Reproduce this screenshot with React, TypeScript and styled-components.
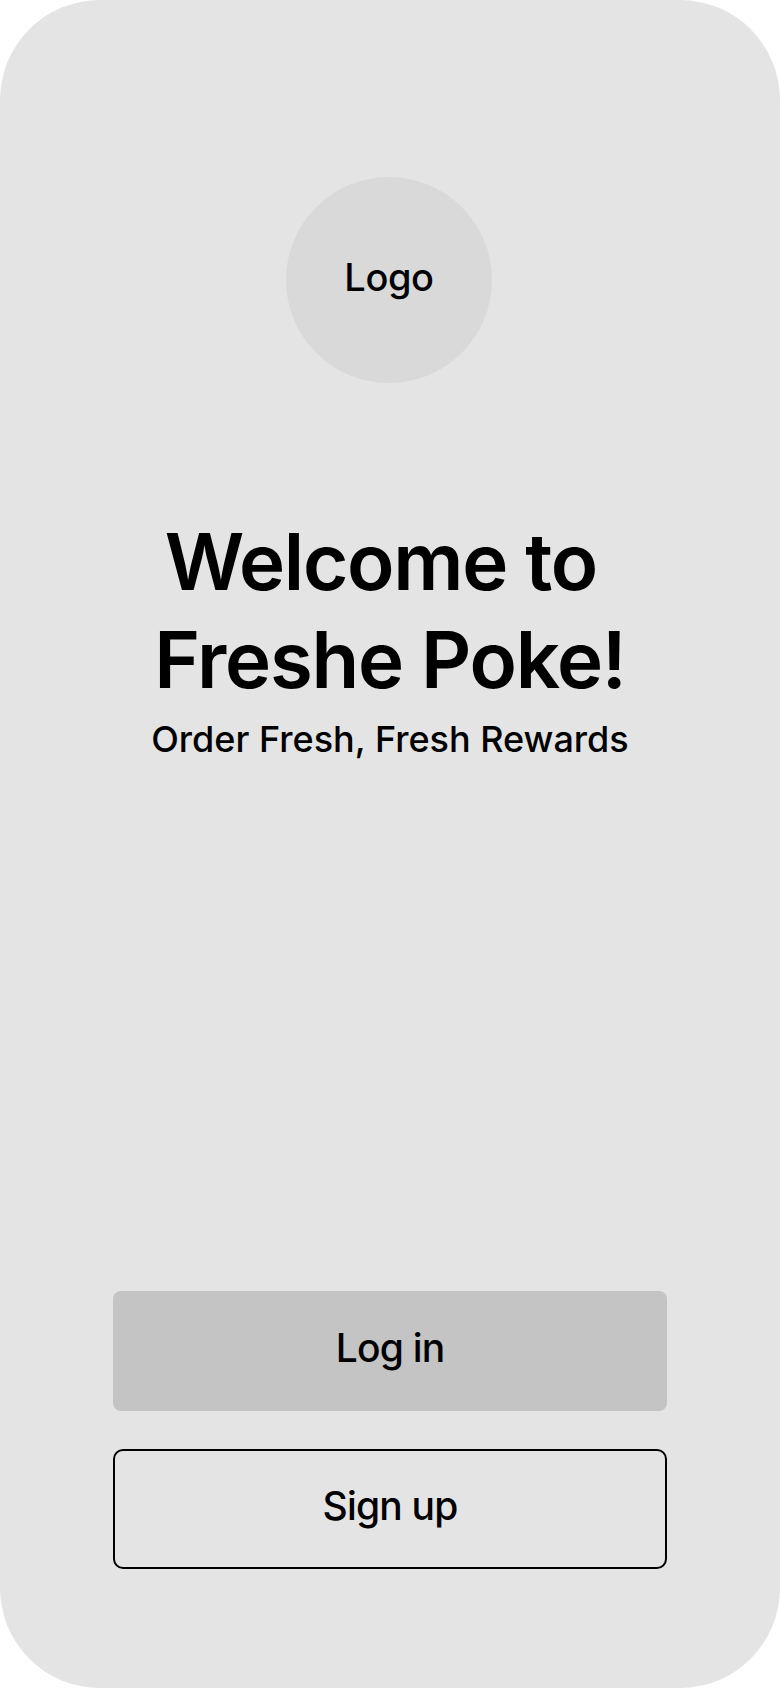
import React from "react";
import styled, { createGlobalStyle } from "styled-components";

const GlobalStyle = createGlobalStyle`
  html, body {
    margin: 0;
    padding: 0;
    background: #ffffff;
  }
  body {
    font-family: "Inter", "Lato", sans-serif;
    color: #000000;
  }
  * { box-sizing: border-box; }
`;

const Frame = styled.main`
  width: 780px;
  height: 1688px;
  border-radius: 100px;
  background: #e4e4e4;
  display: flex;
  flex-direction: column;
  align-items: center;
  padding: 177px 0 119px;
  overflow: hidden;
`;

const LogoCircle = styled.div`
  width: 206px;
  height: 206px;
  border-radius: 50%;
  background: #d9d9d9;
  display: flex;
  align-items: center;
  justify-content: center;
  font-size: 38px;
  font-weight: 500;
  letter-spacing: -0.4px;
  line-height: 1.21;
  padding-bottom: 5px;
  margin-left: -2px;
`;

const Heading = styled.h1`
  margin: 130px 0 0;
  font-size: 78px;
  font-weight: 600;
  letter-spacing: -1.3px;
  line-height: 98px;
  text-align: center;
  white-space: pre;
`;

const Tagline = styled.p`
  margin: 8px 0 0;
  font-size: 36px;
  font-weight: 500;
  letter-spacing: 0;
  line-height: 44px;
  text-align: center;
`;

const Actions = styled.div`
  margin-top: auto;
  display: flex;
  flex-direction: column;
  gap: 38px;
  width: 554px;
`;

const ActionButton = styled.button<{ $variant: "filled" | "outline" }>`
  height: 120px;
  width: 100%;
  border-radius: ${(p) => (p.$variant === "filled" ? "8px" : "10px")};
  border: ${(p) => (p.$variant === "filled" ? "none" : "2px solid #000")};
  background: ${(p) => (p.$variant === "filled" ? "#c4c4c4" : "transparent")};
  color: #000;
  font-family: "Inter", "Lato", sans-serif;
  font-size: 39px;
  font-weight: 500;
  letter-spacing: -0.8px;
  line-height: 1.21;
  padding: 0 0 6px;
  display: flex;
  align-items: center;
  justify-content: center;
  cursor: pointer;
`;

export default function App() {
  return (
    <>
      <GlobalStyle />
      <Frame>
        <LogoCircle>Logo</LogoCircle>
        <Heading>
          {"Welcome to \nFreshe Poke!"}
        </Heading>
        <Tagline>Order Fresh, Fresh Rewards</Tagline>
        <Actions>
          <ActionButton $variant="filled">Log in</ActionButton>
          <ActionButton $variant="outline">Sign up</ActionButton>
        </Actions>
      </Frame>
    </>
  );
}
